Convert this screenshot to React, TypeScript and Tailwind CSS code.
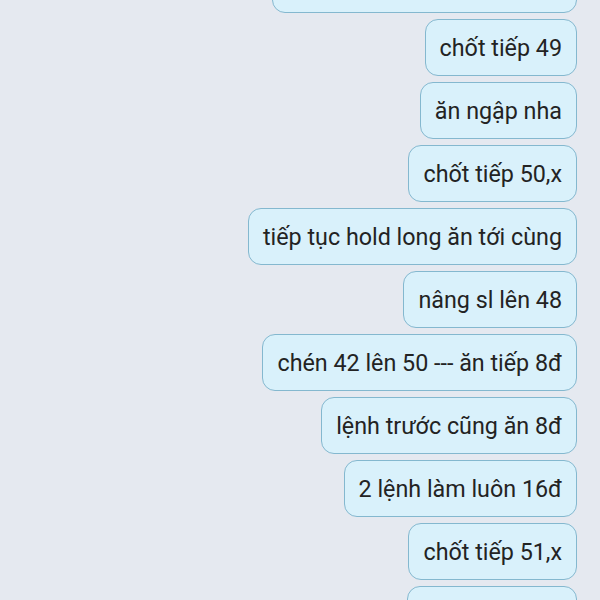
import React from "react";

const msgs = [
  "chốt tiếp 49",
  "ăn ngập nha",
  "chốt tiếp 50,x",
  "tiếp tục hold long ăn tới cùng",
  "nâng sl lên 48",
  "chén 42 lên 50 --- ăn tiếp 8đ",
  "lệnh trước cũng ăn 8đ",
  "2 lệnh làm luôn 16đ",
  "chốt tiếp 51,x",
];

function Bubble({ children, className = "" }: { children?: React.ReactNode; className?: string }) {
  return (
    <div
      className={`h-[57px] shrink-0 flex items-center px-[14px] rounded-[13px] border-[1.5px] border-[#84b8cf] bg-[#d9f1fb] text-[23.3px] leading-[28px] text-[#232323] whitespace-nowrap ${className}`}
    >
      {children}
    </div>
  );
}

export default function App() {
  return (
    <div
      className="w-[600px] h-[600px] overflow-hidden bg-[#e5e9f0] flex flex-col items-end gap-[6px] pr-[23px]"
      style={{ fontFamily: "Roboto, 'Noto Sans', sans-serif" }}
    >
      <Bubble className="-mt-[44px] w-[305px]" />
      {msgs.map((m) => (
        <Bubble key={m}>{m}</Bubble>
      ))}
      <Bubble className="w-[170px]" />
    </div>
  );
}
